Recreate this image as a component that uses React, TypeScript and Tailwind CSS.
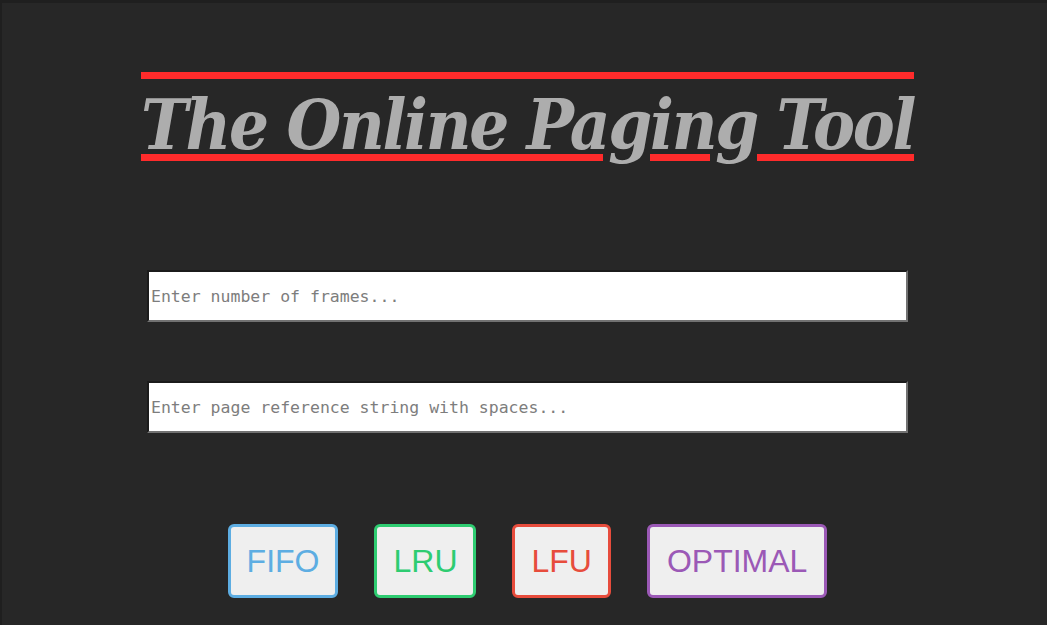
export default function App() {
    return (
        <div className="min-h-[625px] bg-[#272727] border-t-[3px] border-l-2 border-[#1f1f1f] flex flex-col items-center pl-[6px]">
            <h1
                className="mt-[69px] pt-[7px] border-t-[7px] border-[#ff2b2b] text-[70px] leading-[1.1] tracking-[-2.3px] font-bold italic text-[#adadad] underline decoration-[#ff2b2b] decoration-[7px] underline-offset-[5px]"
                style={{ fontFamily: '"DejaVu Serif Condensed", "DejaVu Serif", serif', fontStretch: "condensed" }}
            >
                The Online Paging Tool
            </h1>

            <div className="mt-[107px] w-[761px] flex flex-col gap-[59px]">
                <input
                    type="text"
                    placeholder="Enter number of frames..."
                    className="h-[52px] w-full bg-white border-2 border-t-[#1b1b1b] border-l-[#1b1b1b] border-r-[#727272] border-b-[#727272] px-[2px] text-[16.5px] text-black placeholder:text-[#7d7d7d] outline-none"
                    style={{ fontFamily: '"DejaVu Sans Mono", monospace' }}
                />
                <input
                    type="text"
                    placeholder="Enter page reference string with spaces..."
                    className="h-[52px] w-full bg-white border-2 border-t-[#1b1b1b] border-l-[#1b1b1b] border-r-[#727272] border-b-[#727272] px-[2px] text-[16.5px] text-black placeholder:text-[#7d7d7d] outline-none"
                    style={{ fontFamily: '"DejaVu Sans Mono", monospace' }}
                />
            </div>

            <div className="mt-[91px] flex gap-[36px]" style={{ fontFamily: '"Liberation Sans", Arial, sans-serif' }}>
                <button className="px-[16px] py-[16px] text-[32px] leading-[36px] bg-[#efefef] border-[3px] border-[#5dade2] rounded-[6px] text-[#5dade2]">FIFO</button>
                <button className="px-[16px] py-[16px] text-[32px] leading-[36px] bg-[#efefef] border-[3px] border-[#2ecc71] rounded-[6px] text-[#2ecc71]">LRU</button>
                <button className="px-[16px] py-[16px] text-[32px] leading-[36px] bg-[#efefef] border-[3px] border-[#e74c3c] rounded-[6px] text-[#e74c3c]">LFU</button>
                <button className="px-[17px] py-[16px] text-[32px] leading-[36px] bg-[#efefef] border-[3px] border-[#9b59b6] rounded-[6px] text-[#9b59b6]">OPTIMAL</button>
            </div>
        </div>
    );
}
